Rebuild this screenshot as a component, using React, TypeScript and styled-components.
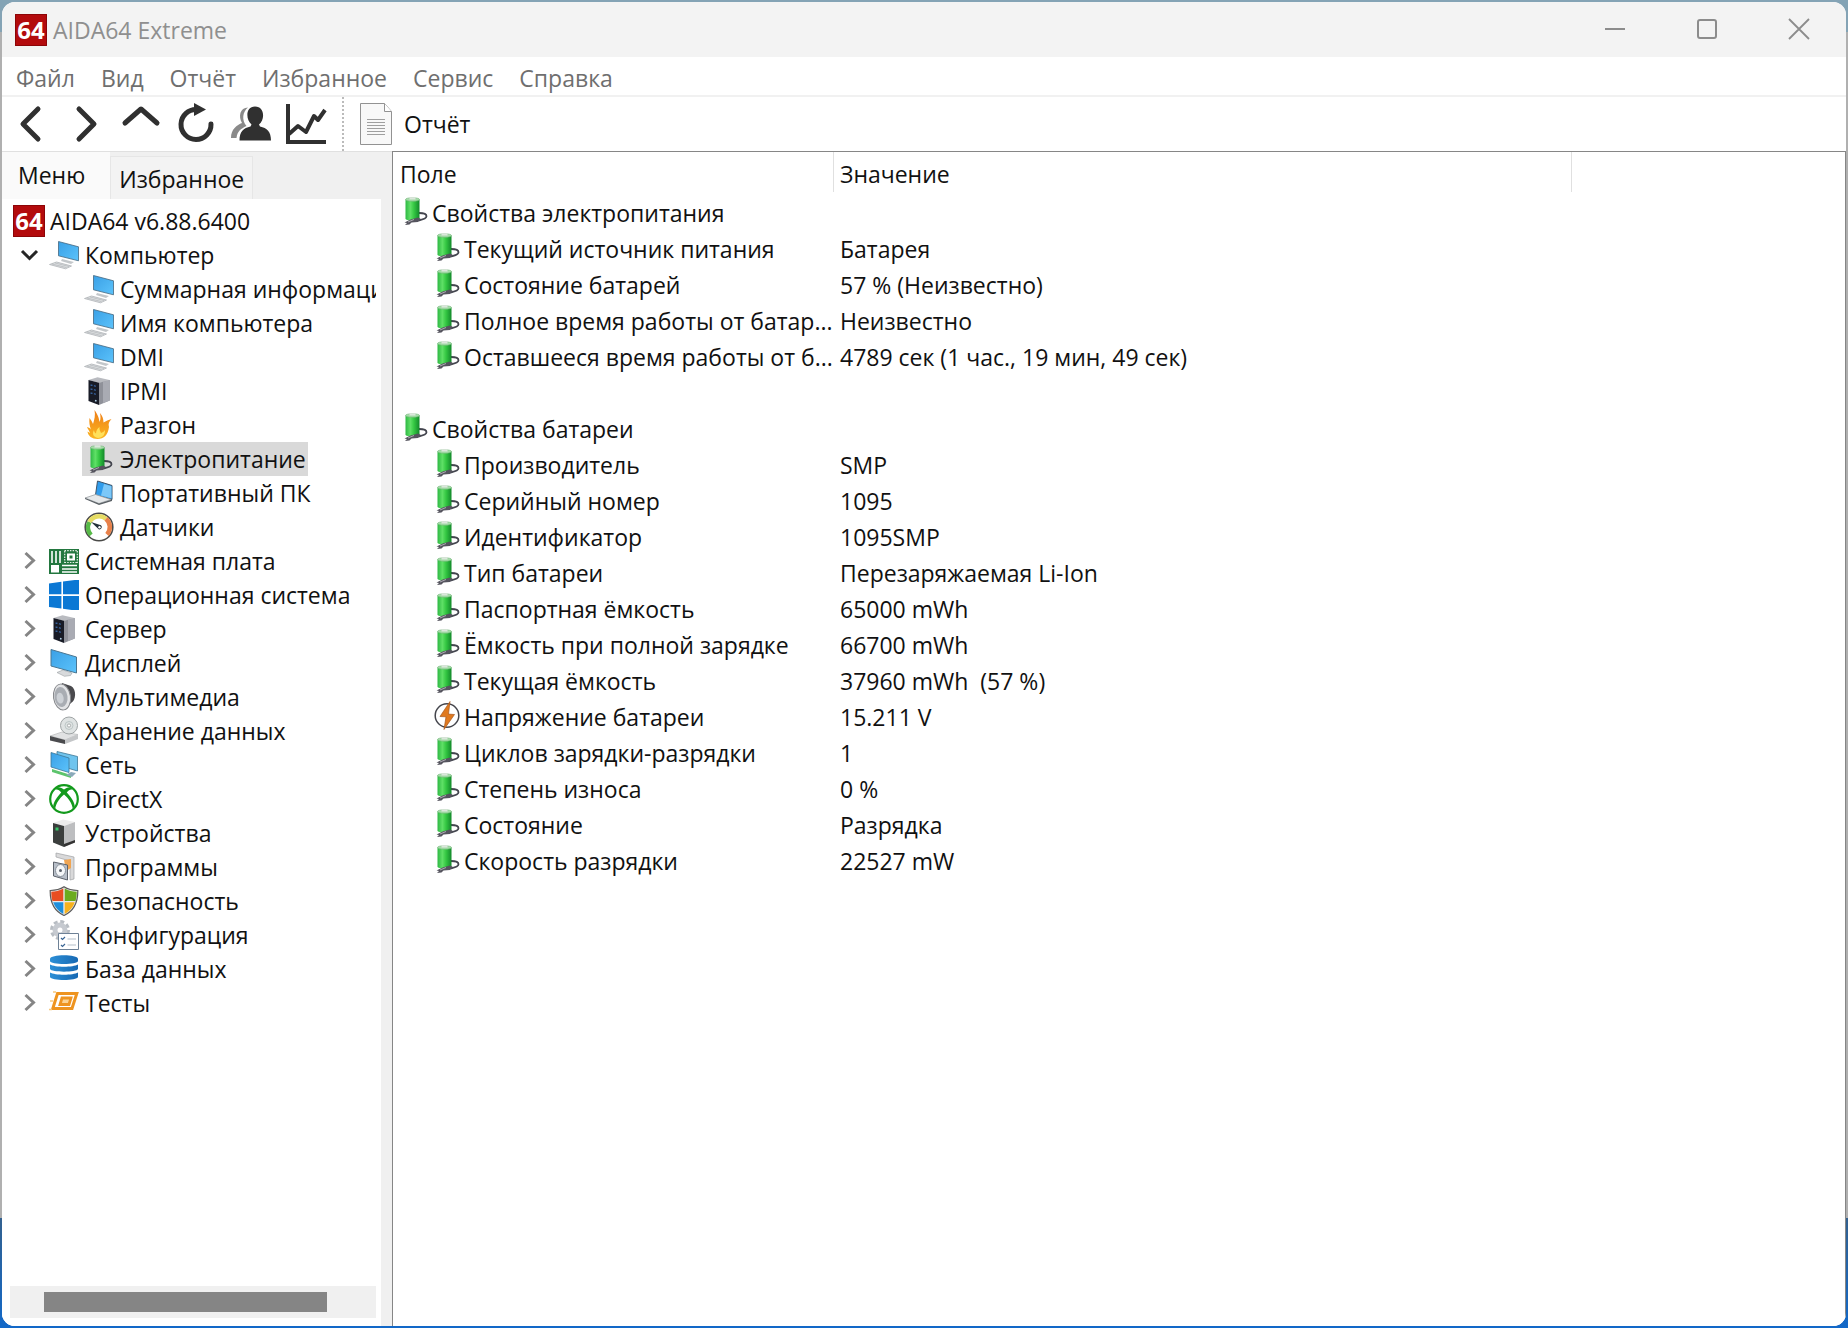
import React from "react";
import styled, { createGlobalStyle } from "styled-components";

const GlobalStyle = createGlobalStyle`
  * { box-sizing: border-box; }
  html, body, #root { height: 100%; }
  body {
    margin: 0;
    overflow: hidden;
    font-family: "Open Sans", "Noto Sans", sans-serif;
    font-size: 23px;
    line-height: 30px;
    color: #111;
  }
  button { font: inherit; color: inherit; background: none; border: 0; padding: 0; margin: 0; }
`;

const Desktop = styled.div`
  height: 100vh;
  padding: 2px;
  background: linear-gradient(#84a3b5 0, #84a3b5 32px, #b0b0b0 32px, #b0b0b0 1218px, #33618f 1218px, #1268c8 100%);
`;

const Window = styled.main`
  height: 100%;
  display: flex;
  flex-direction: column;
  overflow: hidden;
  border-radius: 13px;
  background: #fff;
`;

const TitleBar = styled.header`
  display: flex;
  align-items: center;
  height: 55px;
  flex: none;
  padding: 0 1px 0 13px;
  background: #f3f3f3;
  color: #8f8f8f;
`;

const Title = styled.h1`
  flex: 1;
  margin: 0 0 0 6px;
  font-size: 23px;
  font-weight: 400;
`;

const CaptionButton = styled.button`
  width: 92px;
  height: 54px;
  display: grid;
  place-items: center;
  align-self: flex-start;
  &:hover { background: #e5e5e5; }
`;

const MenuBar = styled.nav`
  display: flex;
  gap: 26px;
  height: 40px;
  flex: none;
  padding: 4px 14px 0;
  border-bottom: 2px solid #f1f1f1;
  color: #6f6f6f;
`;

const ToolBar = styled.div`
  display: flex;
  align-items: center;
  height: 54px;
  flex: none;
  padding-left: 1px;
`;

const ToolButton = styled.button`
  width: 55px;
  height: 50px;
  display: grid;
  place-items: center;
`;

const ToolSeparator = styled.span`
  height: 100%;
  margin: 0 16px 0 9px;
  border-left: 2px dotted #bbb;
`;

const ReportButton = styled.button`
  display: flex;
  align-items: center;
  gap: 12px;
`;

const Body = styled.div`
  flex: 1;
  min-height: 0;
  display: flex;
  background: #f0f0f0;
`;

const SidePanel = styled.aside`
  width: 390px;
  flex: none;
  display: flex;
  flex-direction: column;
  padding-right: 11px;
  border-top: 1px solid #e0e0e0;
`;

const Tabs = styled.div`
  display: flex;
  align-items: flex-end;
  height: 47px;
  flex: none;
`;

const Tab = styled.button<{ $active?: boolean }>`
  height: ${(p) => (p.$active ? 47 : 43)}px;
  padding: ${(p) => (p.$active ? "0 25px 2px 16px" : "1px 8px 0")};
  border: solid #e6e6e6;
  border-width: ${(p) => (p.$active ? "0" : "1px 1px 0")};
  background: ${(p) => (p.$active ? "#fafafa" : "#f3f3f3")};
`;

const TreePane = styled.div`
  flex: 1;
  min-height: 0;
  display: flex;
  flex-direction: column;
  padding: 5px 5px 8px 8px;
  background: #fff;
`;

const TreeList = styled.ul`
  flex: 1;
  min-height: 0;
  overflow: hidden;
  margin: 0;
  padding: 0;
  list-style: none;
`;

const Branch = styled.ul`
  margin: 0;
  padding: 0 0 0 72px;
  list-style: none;
`;

const TreeRow = styled.div`
  display: flex;
  align-items: center;
  height: 34px;
`;

const Expander = styled.button`
  width: 37px;
  height: 34px;
  flex: none;
  display: grid;
  place-items: center;
`;

const TreeLabel = styled.button<{ $selected?: boolean; $root?: boolean }>`
  display: flex;
  align-items: center;
  gap: ${(p) => (p.$root ? 5 : 6)}px;
  height: 34px;
  padding: ${(p) => (p.$root ? "0 4px 0 3px" : "0 2px")};
  white-space: nowrap;
  background: ${(p) => (p.$selected ? "#d9d9d9" : "transparent")};
`;

const ScrollTrack = styled.div`
  height: 32px;
  flex: none;
  display: flex;
  align-items: center;
  padding: 0 49px 0 34px;
  background: #f0f0f0;
`;

const ScrollThumb = styled.div`
  flex: 1;
  height: 20px;
  background: #858585;
`;

const ListPane = styled.section`
  flex: 1;
  min-width: 0;
  border: solid #868686;
  border-width: 1px 1px 0;
  background: #fff;
`;

const ListTable = styled.table`
  width: 100%;
  table-layout: fixed;
  border-collapse: collapse;
  td { height: 36px; padding: 0 1px 0 6px; white-space: pre; }
`;

const FieldColumn = styled.col`
  width: 441px;
`;

const ValueColumn = styled.col`
  width: 738px;
`;

const HeadCell = styled.th`
  height: 43px;
  padding: 0 0 3px;
  font-weight: 400;
  text-align: left;
`;

const HeadText = styled.span<{ $first?: boolean }>`
  display: block;
  height: 40px;
  padding: 7px 0 0 ${(p) => (p.$first ? 7 : 6)}px;
  border-right: 1px solid #e0e0e0;
`;

const HeadRest = styled.th`
  padding: 0;
`;

const Field = styled.div<{ $level: number }>`
  display: flex;
  align-items: center;
  gap: 3px;
  padding-left: ${(p) => p.$level * 32}px;
  svg { flex: none; margin-bottom: 4px; }
`;

const Glyph = ({ children, size = 30 }: { children: React.ReactNode; size?: number }) => (
  <svg width={size} height={size} viewBox={`0 0 ${size} ${size}`} fill="none" aria-hidden="true">
    {children}
  </svg>
);

const LogoText = styled.text`
  font: 700 24px "Open Sans", sans-serif;
  fill: #fff;
`;

const Logo = () => (
  <Glyph size={32}>
    <path fill="#b30b0d" d="M0 0h32v32H0z" />
    <path stroke="#8c0507" d="M.5.5h31v31H.5z" />
    <LogoText x="16" y="25" textAnchor="middle">64</LogoText>
  </Glyph>
);

const Gradients = () => (
  <svg width="0" height="0" style={{ display: "block" }} aria-hidden="true">
    <defs>
      <linearGradient id="screen" x1="0" y1="0" x2="1" y2="1">
        <stop offset="0" stopColor="#3aa0e6" />
        <stop offset="1" stopColor="#5cc3fb" />
      </linearGradient>
      <linearGradient id="cell" x1="0" x2="1">
        <stop offset="0" stopColor="#2eb844" />
        <stop offset=".35" stopColor="#5fe066" />
        <stop offset=".6" stopColor="#35c843" />
        <stop offset="1" stopColor="#12892a" />
      </linearGradient>
      <linearGradient id="metal" x1="0" y1="0" x2="1" y2="1">
        <stop offset="0" stopColor="#e4e4e6" />
        <stop offset="1" stopColor="#8c8e94" />
      </linearGradient>
      <linearGradient id="flame" x1="0" y1="0" x2="0" y2="1">
        <stop offset="0" stopColor="#ee7d17" />
        <stop offset="1" stopColor="#fbb620" />
      </linearGradient>
      <linearGradient id="disk" x1="0" x2="1">
        <stop offset="0" stopColor="#2c8fd6" />
        <stop offset="1" stopColor="#1769b4" />
      </linearGradient>
    </defs>
  </svg>
);

const Computer = () => (
  <Glyph>
    <path fill="#c3c7ca" d="m13 19 12 3-3 2-10-3z" />
    <path fill="url(#screen)" stroke="#45677f" strokeWidth=".8" d="m9.500 1.500 20 5.300v14l-20-5z" />
    <path fill="#dfe2e4" stroke="#aeb2b6" strokeWidth=".8" d="m.5 24.500 7-2.500 15 4-6 2.800z" />
    <path stroke="#a7abae" strokeWidth=".6" d="m3 24 14.500 3.600M6 23l14 3.500" />
  </Glyph>
);

const Server = () => (
  <Glyph>
    <path fill="#b9bbc0" d="m4.500 4 9-2.800L25.500 4l-10 3z" />
    <path fill="#181b26" d="M4.500 4 15 6.800V29L4.500 25z" />
    <path fill="#8f9199" d="M15 6.800 25.800 4v20.500L15 29z" />
    <path fill="#a9abb3" d="M19 5.800 25.800 4v20.500L19 27z" />
    <path stroke="#3f73b8" strokeWidth="1.200" strokeDasharray="2 1.500" d="m6.500 9 6.500 1.500M6.500 13l6.500 1.500M6.500 17l6.500 1.500" />
    <path stroke="#b6d4e8" strokeWidth="1.500" d="m11 24.500 1.500.5" />
  </Glyph>
);

const Flame = () => (
  <Glyph>
    <path fill="url(#flame)" d="M10.500 0c3.500 5 4.500 8 5 12 1.500-3 1-6 .5-9 2.500 3 3.500 6 3.500 9.500C22 11 24.500 10 27.500 9c-2.500 2.500-3.500 5-2.500 8-1 8-5 12-11.500 12C8 29 4 26 3.500 21.500L6 23C5 20 3.500 18.500 3 17c2 .5 3 1 4 2.500C5.500 16 5 12 5.500 8c1.500 2 2.500 3.500 3.500 6C10.500 9.500 11.500 5 10.500 0z" />
    <path fill="#ffe15a" d="M14 28c-5-1-6-4.500-4-8 0 2 1 3 2 3.500 0-3 1.500-5 3.500-6.500-.5 3 1 4 1.500 6 1.500-.5 3-1.500 4-3 0 5-2 7.500-7 8z" />
  </Glyph>
);

const Battery = () => (
  <Glyph>
    <path stroke="#43454e" strokeWidth="1.800" d="M20 17c5 0 7.500 1.500 7.500 3.300 0 2.200-4 3.400-8 4.200" />
    <path fill="url(#cell)" d="M6.500 3.500h14V23c-2 2.400-12 2.400-14 0z" />
    <ellipse cx="13.500" cy="3.500" rx="7" ry="1.800" fill="#a6dba9" stroke="#6fb576" strokeWidth=".6" />
    <path fill="#dce6dc" d="M10.500 1.200h6V3.500h-6z" />
    <path fill="#55545e" d="m5.500 26.500 6-3 7.500-2 3 1.500-3 3-6.500.5-2 2-4.500.5 2-2z" />
    <path stroke="#b4b1bb" strokeWidth=".9" d="m9 26 6-2.500" />
  </Glyph>
);

const Laptop = () => (
  <Glyph>
    <path fill="#2f9cec" stroke="#3f5569" d="m13.500 3 14.500 4.500v14L11.500 17z" />
    <path fill="#7cc8f8" d="m20 6 7.500 2.300v12L17 17.500z" />
    <path fill="#e5e8ea" stroke="#9a9fa3" strokeWidth=".8" d="m1 20 10.500-3.500L27 21.500l-12 4z" />
    <path fill="#5b6166" d="m15 25.500 13-4v1.500L15 27 1 21v-1z" />
  </Glyph>
);

const Gauge = () => (
  <Glyph>
    <circle cx="15" cy="15" r="13.800" fill="#fff" stroke="#4a4a48" strokeWidth="1.600" />
    <path stroke="#57b947" strokeWidth="4.500" d="M7 23A11 11 0 0 1 5.500 10" />
    <path stroke="#e6dc63" strokeWidth="4.500" d="M5.500 10A11 11 0 0 1 22 6.800" />
    <path stroke="#e8814a" strokeWidth="4.500" d="M22 6.800A11 11 0 0 1 23 22.500" />
    <path fill="#24303a" d="m7 10 10 3.200a2.500 2.500 0 0 1-2 4.300z" />
    <circle cx="15.500" cy="15.200" r="1.200" fill="#fff" />
  </Glyph>
);

const Board = () => (
  <Glyph>
    <path fill="#23773f" d="M0 3h30v25H0z" />
    <path stroke="#fff" strokeWidth="1.600" d="M3 5v12M7 5v12M11 5v12M13 19.500h15M13 23h15M13 26h15" />
    <path stroke="#e4efe6" strokeWidth="1.200" strokeDasharray="1.500 1.200" d="M15.500 4.700h13M15.500 16.500h13M15.700 5v12M28.300 5v12" />
    <path fill="#fff" d="M2 19h8v7.500H2zM18 7.500h8v7h-8z" />
    <path fill="#23773f" d="M20.500 9.500h3v3h-3z" />
  </Glyph>
);

const WindowsLogo = () => (
  <Glyph>
    <path fill="#0b78d4" d="m0 3.400 12.400-1.700v12.600H0zM14 1.400 30-.5v14.800H14zM0 16h12.400v12.600L0 27zM14 16h16v15l-16-2.200z" />
  </Glyph>
);

const Display = () => (
  <Glyph>
    <path fill="#d8dadc" stroke="#9b9fa2" strokeWidth=".6" d="m8 24.500 6-2.500 9 3-1.500 2.500-6 .8z" />
    <path fill="url(#screen)" stroke="#4b7691" d="M2 1.500 27.500 9v16L2 18z" />
  </Glyph>
);

const Speaker = () => (
  <Glyph>
    <path fill="#4a4a4d" d="m13 1 9 3c6 3 5 15 0 17l-6 6z" />
    <ellipse cx="13" cy="15" rx="8.500" ry="13" fill="#e3e4e6" stroke="#85878b" transform="rotate(-8 13 15)" />
    <ellipse cx="12" cy="15" rx="6.500" ry="10" fill="#a9adb3" transform="rotate(-8 12 15)" />
    <ellipse cx="11" cy="16" rx="3.500" ry="5.500" fill="#cdd1d6" transform="rotate(-8 12 15)" />
  </Glyph>
);

const Drive = () => (
  <Glyph>
    <path fill="#e1e2e3" stroke="#aeb0b2" strokeWidth=".6" d="m1 20 12-4 16 2.500L16 24z" />
    <path fill="#4a4b4e" d="m1 20 15 4v4L1 24.500z" />
    <path fill="#c4c6c8" d="m16 24 13-5.500v4.500l-13 5z" />
    <circle cx="20" cy="9.500" r="8.500" fill="#dfe3e3" stroke="#9fa4a5" />
    <circle cx="20" cy="9.500" r="4" stroke="#bcc6c6" />
    <circle cx="20" cy="9.500" r="1.600" fill="#fff" stroke="#8e9393" strokeWidth=".7" />
  </Glyph>
);

const Network = () => (
  <Glyph>
    <path fill="#5cc46c" d="m3 19 19 6v3L3 22z" />
    <path fill="#6fc4ee" stroke="#3d7795" strokeWidth=".8" d="m8 1.500 20.500 5v14.500L8 15z" />
    <path fill="url(#screen)" stroke="#3d7795" strokeWidth=".8" d="m2 2.500 18 5.500v14.500L2 17z" />
    <path fill="#8aa9ba" d="m17 25 5-3 5 1-4 4z" />
  </Glyph>
);

const Xbox = () => (
  <Glyph>
    <circle cx="15" cy="15" r="13.800" fill="#fff" stroke="#139a1c" strokeWidth="2.200" />
    <path fill="#139a1c" d="M7.500 3.500c3-1 5.500.5 7.500 2 2-1.500 4.500-3 7.500-2l1 2.200c-2-.6-4 .6-5.700 2.800 4.200 4.500 7.700 9.500 8 14l-2 2.300C23 19 19.500 14.500 15 10.500 10.500 14.500 7 19 6.200 24.800l-2-2.300c.3-4.500 3.800-9.500 8-14C10.500 6.300 8.500 5.100 6.500 5.700z" />
  </Glyph>
);

const Devices = () => (
  <Glyph>
    <path fill="#ececec" d="m4 5 10-3.500L26 4l-11 4z" />
    <path fill="#3b3e3d" d="m4 5 11 3v21L4 24.500z" />
    <path fill="#bdbec0" d="m15 8 11-4v20.500L15 29z" />
    <path fill="#333" d="m15 26 11-4v2.500L15 29z" />
    <path fill="#37c467" d="M6.500 9.500h3v3h-3z" />
  </Glyph>
);

const Programs = () => (
  <Glyph>
    <path fill="#d9d9da" stroke="#9fa0a3" strokeWidth=".7" d="m7 1 18 4v22l-4 1V9L7 5z" />
    <path fill="#f0a552" d="m15 8 7-1v9l-5 3z" />
    <path fill="#b8bfc9" stroke="#5d636c" d="m4.500 10 14 3v15l-14-4z" />
    <ellipse cx="11.500" cy="18.500" rx="5" ry="6" fill="#f5f7f9" stroke="#8a929c" />
    <circle cx="11.500" cy="18.500" r="1.500" fill="#5d636c" />
  </Glyph>
);

const Shield = () => (
  <Glyph>
    <path fill="#e8e8e8" stroke="#5a5a5a" strokeWidth="1.200" d="M15 .8C11 3.500 6 4.500 1.200 4.500 1 17 5 25 15 29.500 25 25 29 17 28.800 4.500 24 4.500 19 3.500 15 .8z" />
    <path fill="#e84e22" d="M14.300 2.500C10 5 6.500 5.700 2.300 5.700c0 3 .3 6.500 1.200 9.300h10.800z" />
    <path fill="#6bab1e" d="M15.700 2.500c4 2.500 7.800 3.200 12 3.200 0 3-.3 6.500-1.200 9.300H15.700z" />
    <path fill="#1e8fdc" d="M4.200 16.300C6 21.500 9.500 25.500 14.300 28V16.300z" />
    <path fill="#f8b21c" d="M25.800 16.300C24 21.500 20.500 25.500 15.700 28V16.300z" />
  </Glyph>
);

const Config = () => (
  <Glyph>
    <circle cx="11" cy="10" r="7.500" stroke="#b8bdc3" strokeWidth="5" strokeDasharray="3.500 2.390" />
    <circle cx="11" cy="10" r="5" stroke="#c6cad0" strokeWidth="5" />
    <path fill="#fff" stroke="#6e8196" d="M9.500 13.500h20v16h-20z" />
    <path stroke="#3a6594" strokeWidth="1.200" d="m12 18 1.500 1.500L16 17m-4 8 1.500 1.500L16 24" />
    <path stroke="#b5bfc9" strokeWidth="1.200" d="M18.500 19H27m-8.500 6H27" />
  </Glyph>
);

const Database = () => (
  <Glyph>
    <path fill="url(#disk)" d="M1 5c0-5 28-5 28 0v2c0 4-28 4-28 0zM1 10.500c5 3 23 3 28 0V15c-1 3.500-27 3.500-28 0zM1 18.500c5 3 23 3 28 0v4.500c-1 4-27 4-28 0z" />
  </Glyph>
);

const Tests = () => (
  <Glyph>
    <path stroke="#ee9420" strokeWidth="3" d="M8.500 5.500h19.300L23 20.500H3.800z" />
    <path fill="#fbd394" stroke="#ee9420" strokeWidth="2.800" d="M13 10h9l-2 6.500h-9z" />
    <path stroke="#f8c77c" strokeWidth="1.400" d="M4 4h3M1 13h3M0 21.500h3" />
  </Glyph>
);

const Voltage = () => (
  <Glyph>
    <circle cx="16" cy="15.500" r="11.800" fill="#fff" stroke="#45464d" strokeWidth="1.500" />
    <path fill="#e0791f" stroke="#a8581c" strokeWidth=".7" d="M19 1.500 9 16.500l6 .3L13 29.500l10.500-15-6-.4z" />
  </Glyph>
);

const Chevron = ({ open }: { open?: boolean }) => (
  <Glyph size={20}>
    <path
      d={open ? "m3 6 7.500 7.500L18 6" : "m6.500 2 8 7.500-8 7.500"}
      stroke={open ? "#262626" : "#858585"}
      strokeWidth="3"
    />
  </Glyph>
);

const MinimizeIcon = () => <Glyph size={22}><path stroke="#8c8c8c" strokeWidth="2" d="M1 11h20" /></Glyph>;
const MaximizeIcon = () => <Glyph size={22}><rect x="2" y="2" width="18" height="18" rx="2" stroke="#8c8c8c" strokeWidth="2" /></Glyph>;
const CloseIcon = () => <Glyph size={22}><path stroke="#8c8c8c" strokeWidth="1.800" d="m1 1 20 20M21 1 1 21" /></Glyph>;

const toolPaths: { label: string; art: React.ReactNode }[] = [
  { label: "Назад", art: <path stroke="#303030" strokeWidth="5" strokeLinecap="round" strokeLinejoin="round" d="M28 6 13 21l15 15" /> },
  { label: "Вперёд", art: <path stroke="#303030" strokeWidth="5" strokeLinecap="round" strokeLinejoin="round" d="m14 6 15 15-15 15" /> },
  { label: "Вверх", art: <path stroke="#303030" strokeWidth="5" strokeLinecap="round" strokeLinejoin="round" d="m5 20 16-14 16 14" /> },
  {
    label: "Обновить",
    art: (
      <>
        <path stroke="#303030" strokeWidth="5" strokeLinecap="round" d="M22 6.500A15 15 0 1 0 36 21" />
        <path fill="#303030" d="m19 0 12 6.500L19 13z" />
      </>
    ),
  },
  {
    label: "Пользователи",
    art: (
      <>
        <path fill="#8a8a8a" d="M18 4.500c-8 0-10 9-6 15.500C7 22 1 26 1 35h5.500c1-7 4-9 10-12-5-6-4-14 1.500-18.500z" />
        <path fill="#303030" d="M25 3.500c10 0 10 13 4 18l1 2c7 1.500 11 5 11 14H9.500c0-9 4-12.500 11-14l1-2c-6-5-6-18 3.500-18z" />
      </>
    ),
  },
  {
    label: "График",
    art: (
      <>
        <path stroke="#303030" strokeWidth="4" d="M3 1v38h38" />
        <path stroke="#303030" strokeWidth="4" strokeLinejoin="round" d="m4 31 9-8 8 6 8-16 4 4 7-10" />
      </>
    ),
  },
];

const PageIcon = () => (
  <svg width="32" height="42" viewBox="0 0 32 42" fill="none" aria-hidden="true">
    <path fill="#f8f8f8" stroke="#929292" d="M.5.5h24l7 8v33H.5z" />
    <path fill="#fff" stroke="#929292" d="M24.500.5v8h7" />
    <path stroke="#9f9f9f" d="M7 16.500h18M7 19.500h18M7 22.500h18M7 25.500h18M7 28.500h18M7 31.500h18" />
  </svg>
);

const computerItems = [
  { icon: Computer, text: "Суммарная информация" },
  { icon: Computer, text: "Имя компьютера" },
  { icon: Computer, text: "DMI" },
  { icon: Server, text: "IPMI" },
  { icon: Flame, text: "Разгон" },
  { icon: Battery, text: "Электропитание", selected: true },
  { icon: Laptop, text: "Портативный ПК" },
  { icon: Gauge, text: "Датчики" },
];

const categories = [
  { icon: Computer, text: "Компьютер", items: computerItems },
  { icon: Board, text: "Системная плата" },
  { icon: WindowsLogo, text: "Операционная система" },
  { icon: Server, text: "Сервер" },
  { icon: Display, text: "Дисплей" },
  { icon: Speaker, text: "Мультимедиа" },
  { icon: Drive, text: "Хранение данных" },
  { icon: Network, text: "Сеть" },
  { icon: Xbox, text: "DirectX" },
  { icon: Devices, text: "Устройства" },
  { icon: Programs, text: "Программы" },
  { icon: Shield, text: "Безопасность" },
  { icon: Config, text: "Конфигурация" },
  { icon: Database, text: "База данных" },
  { icon: Tests, text: "Тесты" },
];

const rows: { field: string; value?: string; level?: number; icon?: () => React.ReactElement }[] = [
  { field: "Свойства электропитания", level: 0 },
  { field: "Текущий источник питания", value: "Батарея" },
  { field: "Состояние батарей", value: "57 % (Неизвестно)" },
  { field: "Полное время работы от батар...", value: "Неизвестно" },
  { field: "Оставшееся время работы от б...", value: "4789 сек (1 час., 19 мин, 49 сек)" },
  { field: "" },
  { field: "Свойства батареи", level: 0 },
  { field: "Производитель", value: "SMP" },
  { field: "Серийный номер", value: "1095" },
  { field: "Идентификатор", value: "1095SMP" },
  { field: "Тип батареи", value: "Перезаряжаемая Li-Ion" },
  { field: "Паспортная ёмкость", value: "65000 mWh" },
  { field: "Ёмкость при полной зарядке", value: "66700 mWh" },
  { field: "Текущая ёмкость", value: "37960 mWh  (57 %)" },
  { field: "Напряжение батареи", value: "15.211 V", icon: Voltage },
  { field: "Циклов зарядки-разрядки", value: "1" },
  { field: "Степень износа", value: "0 %" },
  { field: "Состояние", value: "Разрядка" },
  { field: "Скорость разрядки", value: "22527 mW" },
];

export default function App() {
  return (
    <Desktop>
      <GlobalStyle />
      <Window>
        <Gradients />
        <TitleBar>
          <Logo />
          <Title>AIDA64 Extreme</Title>
          <CaptionButton aria-label="Свернуть"><MinimizeIcon /></CaptionButton>
          <CaptionButton aria-label="Развернуть"><MaximizeIcon /></CaptionButton>
          <CaptionButton aria-label="Закрыть"><CloseIcon /></CaptionButton>
        </TitleBar>
        <MenuBar>
          {["Файл", "Вид", "Отчёт", "Избранное", "Сервис", "Справка"].map((m) => (
            <button key={m}>{m}</button>
          ))}
        </MenuBar>
        <ToolBar>
          {toolPaths.map((t) => (
            <ToolButton key={t.label} aria-label={t.label}>
              <Glyph size={42}>{t.art}</Glyph>
            </ToolButton>
          ))}
          <ToolSeparator />
          <ReportButton>
            <PageIcon />
            Отчёт
          </ReportButton>
        </ToolBar>
        <Body>
          <SidePanel>
            <Tabs>
              <Tab $active>Меню</Tab>
              <Tab>Избранное</Tab>
            </Tabs>
            <TreePane>
              <TreeList>
                <li>
                  <TreeRow>
                    <TreeLabel $root><Logo />AIDA64 v6.88.6400</TreeLabel>
                  </TreeRow>
                </li>
                {categories.map(({ icon: Icon, text, items }) => (
                  <li key={text}>
                    <TreeRow>
                      <Expander aria-label={text} aria-expanded={!!items}><Chevron open={!!items} /></Expander>
                      <TreeLabel><Icon />{text}</TreeLabel>
                    </TreeRow>
                    {items && (
                      <Branch>
                        {items.map(({ icon: ItemIcon, text: label, selected }) => (
                          <li key={label}>
                            <TreeRow>
                              <TreeLabel $selected={selected}><ItemIcon />{label}</TreeLabel>
                            </TreeRow>
                          </li>
                        ))}
                      </Branch>
                    )}
                  </li>
                ))}
              </TreeList>
              <ScrollTrack><ScrollThumb /></ScrollTrack>
            </TreePane>
          </SidePanel>
          <ListPane>
            <ListTable>
              <colgroup>
                <FieldColumn />
                <ValueColumn />
                <col />
              </colgroup>
              <thead>
                <tr>
                  <HeadCell scope="col"><HeadText $first>Поле</HeadText></HeadCell>
                  <HeadCell scope="col"><HeadText>Значение</HeadText></HeadCell>
                  <HeadRest />
                </tr>
              </thead>
              <tbody>
                {rows.map(({ field, value, level = 1, icon: Icon = Battery }, i) => (
                  <tr key={i}>
                    <td>
                      {field && (
                        <Field $level={level}>
                          <Icon />
                          {field}
                        </Field>
                      )}
                    </td>
                    <td>{value}</td>
                    <td />
                  </tr>
                ))}
              </tbody>
            </ListTable>
          </ListPane>
        </Body>
      </Window>
    </Desktop>
  );
}
